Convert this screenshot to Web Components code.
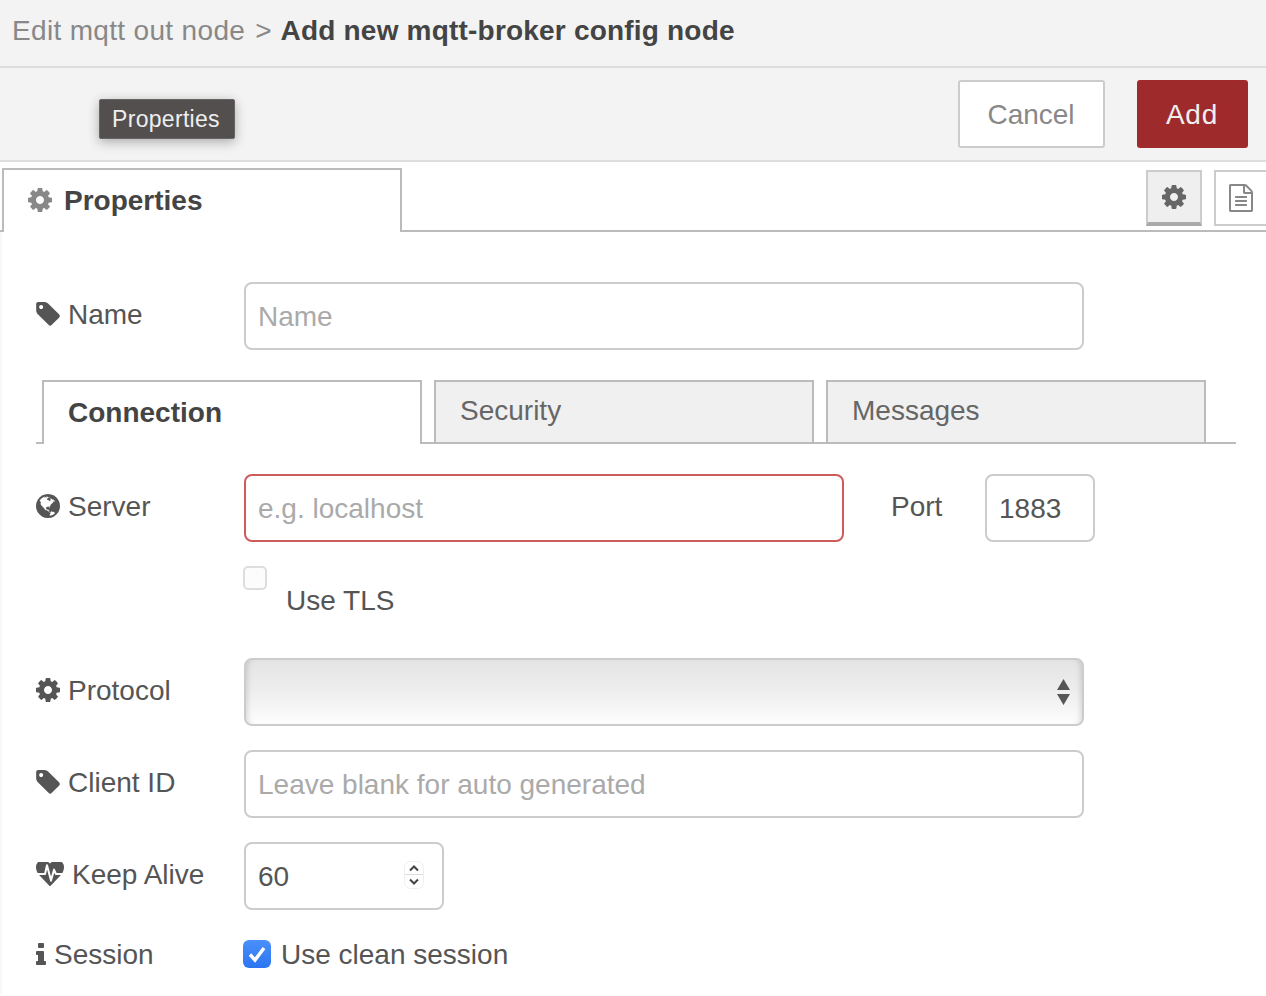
<!DOCTYPE html>
<html lang="en">
<head>
<meta charset="utf-8">
<title>Edit mqtt out node</title>
<style>
  html, body { margin: 0; height: 100%; overflow: hidden; background: #fff; }
  body { font: 28px/40px "Liberation Sans", Arial, sans-serif; color: #555; }
</style>
</head>
<body>
<nr-editor-title>
  <span slot="parent">Edit mqtt out node</span>
  <span slot="current">Add new mqtt-broker config node</span>
</nr-editor-title>
<nr-toolbar>
  <nr-tooltip slot="tip">Properties</nr-tooltip>
  <nr-button>Cancel</nr-button>
  <nr-button primary>Add</nr-button>
</nr-toolbar>
<nr-sheet-tabs label="Properties"></nr-sheet-tabs>
<nr-form>
  <nr-row icon="tag" label="Name"><nr-input grow placeholder="Name"></nr-input></nr-row>
  <nr-tabs>
    <nr-tab active>Connection</nr-tab>
    <nr-tab>Security</nr-tab>
    <nr-tab>Messages</nr-tab>
  </nr-tabs>
  <nr-row icon="globe" label="Server">
    <nr-input width="600" invalid placeholder="e.g. localhost"></nr-input>
    <nr-inline-label>Port</nr-inline-label>
    <nr-input width="110" value="1883"></nr-input>
  </nr-row>
  <nr-row tall><nr-tls-check>Use TLS</nr-tls-check></nr-row>
  <nr-row icon="cog" label="Protocol"><nr-select></nr-select></nr-row>
  <nr-row icon="tag" label="Client ID"><nr-input grow placeholder="Leave blank for auto generated"></nr-input></nr-row>
  <nr-row icon="heartbeat" label="Keep Alive"><nr-input width="200" value="60" spinner></nr-input></nr-row>
  <nr-row icon="info" label="Session" compact><nr-clean-check>Use clean session</nr-clean-check></nr-row>
</nr-form>

<script>
/* font-awesome 4 shapes, with the viewBox cropped to the ink */
const ICONS = {
  cog: { box: '0 128 1536 1536', w: 24, h: 24, d: 'M1024 896q0-106-75-181t-181-75-181 75-75 181 75 181 181 75 181-75 75-181zm512-109v222q0 12-8 23t-20 13l-185 28q-19 54-39 91 35 50 107 138 10 12 10 25t-9 23q-27 37-99 108t-94 71q-12 0-26-9l-138-108q-44 23-91 38-16 136-29 186-7 28-36 28h-222q-14 0-24.500-8.500t-11.500-21.500l-28-184q-49-16-90-37l-141 107q-10 9-25 9-14 0-25-11-126-114-165-168-7-10-7-23 0-12 8-23 15-21 51-66.500t54-70.500q-27-50-41-99l-183-27q-13-2-21-12.500t-8-23.500v-222q0-12 8-23t19-13l186-28q14-46 39-92-40-57-107-138-10-12-10-24 0-10 9-23 26-36 98.500-107.500t94.500-71.500q13 0 26 10l138 107q44-23 91-38 16-136 29-186 7-28 36-28h222q14 0 24.500 8.500t11.500 21.500l28 184q49 16 90 37l142-107q9-9 24-9 13 0 25 10 129 119 165 170 7 8 7 22 0 12-8 23-15 21-51 66.500t-54 70.500q26 50 41 98l183 28q13 2 21 12.500t8 23.500z' },
  tag: { box: '128 128 1515 1536', w: 24, h: 24, d: 'M576 448q0-53-37.500-90.500t-90.500-37.500-90.500 37.500-37.500 90.500 37.500 90.500 90.500 37.500 90.500-37.500 37.500-90.500zm1067 576q0 53-37 90l-491 492q-39 37-91 37-53 0-90-37l-715-716q-38-37-64.500-101t-26.500-117v-416q0-52 38-90t90-38h416q53 0 117 26.500t102 64.500l715 714q37 39 37 91z' },
  globe: { box: '128 128 1536 1536', w: 24, h: 24, rule: 'nonzero', d: 'M896 128q209 0 385.500 103t279.500 279.500 103 385.500-103 385.500-279.500 279.500-385.500 103-385.500-103-279.500-279.500-103-385.500 103-385.500 279.500-279.500 385.500-103zm274 521q-2 1-9.500 9.500t-13.500 9.500q2 0 4.500-5t5-11 3.500-7q6-7 22-15 14-6 52-12 34-8 51 11-2-2 9.500-13t14.500-12q3-2 15-4.500t15-7.500l2-22q-12 1-17.500-7t-6.500-21q0 2-6 8 0-7-4.500-8t-11.500 1-9 1q-10-3-15-7.500t-8-16.500-4-15q-2-5-9.500-11t-9.500-10q-1-2-2.500-5.500t-3-6.500-4-5.500-5.500-2.500-7 5-7.500 10-4.500 5q-3-2-6-1.500t-4.500 1-4.500 3-5 3.500q-3 2-8.500 3t-8.500 2q15-5-1-11-10-4-16-3 9-4 7.500-12t-8.500-14h5q-1-4-8.500-8.500t-17.500-8.500-13-6q-8-5-34-9.500t-33-.5q-5 6-4.500 10.500t4 14 3.500 12.500q1 6-5.500 13t-6.500 12q0 7 14 15.500t10 21.500q-3 8-16 16t-16 12q-5 8-1.500 18.500t10.500 16.500q2 2 1.500 4t-3.500 4.500-5.500 4-6.500 3.500l-3 2q-11 5-20.500-6t-13.500-26q-7-25-16-30-23-8-29 1-5-13-41-26-25-9-58-4 6-1 0-15-7-15-19-12 3-6 4-17.500t1-13.500q3-13 12-23 1-1 7-8.500t9.500-13.500.5-6q35 4 50-11 5-5 11.500-17t10.500-17q9-6 14-5.500t14.500 5.500 14.500 5q14 1 15.500-11t-7.500-20q12 1 3-17-4-7-8-9-12-4-27 5-8 4 2 8-1-1-9.500 10.500t-16.500 17.500-16-5q-1-1-5.500-13.500t-9.500-13.500q-8 0-16 15 3-8-11-15t-24-8q19-12-8-27-7-4-20.500-5t-19.500 4q-5 7-5.500 11.500t5 8 10.500 5.500 11.500 4 8.500 3q14 10 8 14-2 1-8.500 3.500t-11.500 4.500-6 4q-3 4 0 14t-2 14q-5-5-9-17.500t-7-16.500q7 9-25 6l-10-1q-4 0-16 2t-20.500 1-13.500-8q-4-8 0-20 1-4 4-2-4-3-11-9.500t-10-8.500q-46 15-94 41 6 1 12-1 5-2 13-6.500t10-5.500q34-14 42-7l5-5q14 16 20 25-7-4-30-1-20 6-22 12 7 12 5 18-4-3-11.500-10t-14.500-11-15-5q-16 0-22 1-146 80-235 222 7 7 12 8 4 1 5 9t2.500 11 11.500-3q9 8 3 19 1-1 44 27 19 17 21 21 3 11-10 18-1-2-9-9t-9-4q-3 5 .5 18.500t10.500 12.500q-7 0-9.500 16t-2.500 35.500-1 23.500l2 1q-3 12 5.500 34.500t21.500 19.500q-13 3 20 43 6 8 8 9 3 2 12 7.500t15 10 10 10.500q4 5 10 22.500t14 23.500q-2 6 9.500 20t10.500 23q-1 0-2.500 1t-2.500 1q3 7 15.500 14t15.500 13q1 3 2 10t3 11 8 2q2-20-24-62-15-25-17-29-3-5-5.500-15.500t-4.500-14.500q2 0 6 1.500t8.500 3.500 7.500 4 2 3q-3 7 2 17.500t12 18.500 17 19 12 13q6 6 14 19.500t0 13.500q9 0 20 10.500t17 19.500q5 8 8 26t5 24q2 7 8.500 13.500t12.500 9.500l16 8 13 7q5 2 18.500 10.500t21.500 11.500q10 4 16 4t14.500-2.500 13.500-3.500q15-2 29 15t21 21q36 19 55 11-2 1 .5 7.500t8 15.500 9 14.500 5.500 8.500q5 6 18 15t18 15q6-4 7-9-3 8 7 20t18 10q14-3 14-32-31 15-49-18 0-1-2.500-5.500t-4-8.500-2.500-8.500 0-7.500 5-3q9 0 10-3.500t-2-12.500-4-13q-1-8-11-20t-12-15q-5 9-16 8t-16-9q0 1-1.500 5.500t-1.500 6.500q-13 0-15-1 1-3 2.500-17.500t3.500-22.500q1-4 5.500-12t7.500-14.500 4-12.500-4.500-9.500-17.500-2.500q-19 1-26 20-1 3-3 10.500t-5 11.500-9 7q-7 3-24 2t-24-5q-13-8-22.500-29t-9.500-37q0-10 2.500-26.500t3-25-5.500-24.500q3-2 9-9.500t10-10.500q2-1 4.500-1.500t4.500 0 4-1.500 3-6q-1-1-4-3-3-3-4-3 7 3 28.500-1.500t27.500 1.500q15 11 22-2 0-1-2.500-9.500t-.5-13.500q5 27 29 9 3 3 15.500 5t17.500 5q3 2 7 5.500t5.500 4.500 5-.5 8.500-6.500q10 14 12 24 11 40 19 44 7 3 11 2t4.500-9.500 0-14-1.500-12.500l-1-8v-18l-1-8q-15-3-18.500-12t1.500-18.500 15-18.500q1-1 8-3.500t15.500-6.500 12.500-8q21-19 15-35 7 0 11-9-1 0-5-3t-7.500-5-4.500-2q9-5 2-16 5-3 7.500-11t7.500-10q9 12 21 2 8-8 1-16 5-7 20.500-10.500t18.500-9.500q7 2 8-2t1-12 3-12q4-5 15-9t13-5l17-11q3-4 0-4 18 2 31-11 10-11-6-20 3-6-3-9.500t-15-5.500q3-1 11.500-.5t10.500-1.500q15-10-7-16-17-5-43 12zm-163 877q206-36 351-189-3-3-12.500-4.500t-12.500-3.500q-18-7-24-8 1-7-2.500-13t-8-9-12.500-8-11-7q-2-2-7-6t-7-5.500-7.500-4.500-8.500-2-10 1l-3 1q-3 1-5.500 2.500t-5.500 3-4 3 0 2.500q-21-17-36-22-5-1-11-5.500t-10.500-7-10-1.500-11.500 7q-5 5-6 15t-2 13q-7-5 0-17.500t2-18.500q-3-6-10.500-4.500t-12 4.500-11.500 8.500-9 6.500-8.500 5.500-8.500 7.500q-3 4-6 12t-5 11q-2-4-11.500-6.500t-9.500-5.500q2 10 4 35t5 38q7 31-12 48-27 25-29 40-4 22 12 26 0 7-8 20.500t-7 21.500q0 6 2 16z' },
  heartbeat: { box: '0 250 1792 1416', w: 28, h: 24, stretch: true, d: 'M1280 1024h305q-5 6-10 10.500t-9 7.500l-3 4-623 600q-18 18-44 18t-44-18l-624-602q-5-2-21-20h369q22 0 39.500-13.500t22.500-34.500l70-281 190 667q6 20 23 33t39 13q21 0 38-13t23-33l146-485 56 112q18 35 57 35zm512-428q0 145-103 300h-369l-111-221q-8-17-25.500-27t-36.500-8q-45 5-56 46l-129 430-196-686q-6-20-23.500-33t-39.500-13-39 13.500-22 34.500l-116 464h-423q-103-155-103-300 0-220 127-344t351-124q62 0 126.500 21.500t120 58 95.500 68.500 76 68q36-36 76-68t95.500-68.500 120-58 126.500-21.500q224 0 351 124t127 344z' },
  info: { box: '576 128 640 1408', w: 10, h: 22, d: 'M1216 1344v128q0 26-19 45t-45 19h-512q-26 0-45-19t-19-45v-128q0-26 19-45t45-19h64v-384h-64q-26 0-45-19t-19-45v-128q0-26 19-45t45-19h384q26 0 45 19t19 45v576h64q26 0 45 19t19 45zm-128-1152v192q0 26-19 45t-45 19h-256q-26 0-45-19t-19-45v-192q0-26 19-45t45-19h256q26 0 45 19t19 45z' },
  file: { box: '128 0 1536 1792', w: 24, h: 28, d: 'M1596 380q28 28 48 76t20 88v1152q0 40-28 68t-68 28h-1344q-40 0-68-28t-28-68v-1600q0-40 28-68t68-28h896q40 0 88 20t76 48zm-444-244v376h376q-10-29-22-41l-313-313q-12-12-41-22zm384 1528v-1024h-416q-40 0-68-28t-28-68v-416h-768v1536h1280zm-1024-864q0-14 9-23t23-9h704q14 0 23 9t9 23v64q0 14-9 23t-23 9h-704q-14 0-23-9t-9-23v-64zm736 224q14 0 23 9t9 23v64q0 14-9 23t-23 9h-704q-14 0-23-9t-9-23v-64q0-14 9-23t23-9h704zm0 256q14 0 23 9t9 23v64q0 14-9 23t-23 9h-704q-14 0-23-9t-9-23v-64q0-14 9-23t23-9h704z' }
};

function iconSvg(name, color) {
  const i = ICONS[name];
  const fit = i.stretch ? ' preserveAspectRatio="none"' : '';
  return `<svg xmlns="http://www.w3.org/2000/svg" width="${i.w}" height="${i.h}" viewBox="${i.box}"${fit} style="display:block;flex:none" aria-hidden="true"><path fill="${color}" fill-rule="${i.rule || 'nonzero'}" d="${i.d}"/></svg>`;
}

class NrElement extends HTMLElement {
  constructor() {
    super();
    this.attachShadow({ mode: 'open' });
  }

  connectedCallback() {
    this.render();
  }
}

class NrEditorTitle extends NrElement {
  render() {
    this.shadowRoot.innerHTML = `
      <style>
        :host { display: block; height: 66px; background: #f3f3f3; border-bottom: 2px solid #ddd; }
        .crumbs { display: flex; align-items: center; height: 62px; padding-left: 12px; white-space: nowrap; color: #888; }
        .parent { letter-spacing: .33px; }
        .sep { margin: 0 9px 0 10px; }
        .now { font-weight: bold; color: #444; letter-spacing: .2px; }
      </style>
      <div class="crumbs"><span class="parent"><slot name="parent"></slot></span><span class="sep">&gt;</span><span class="now"><slot name="current"></slot></span></div>
    `;
  }
}

class NrToolbar extends NrElement {
  render() {
    this.shadowRoot.innerHTML = `
      <style>
        :host { display: flex; position: relative; justify-content: flex-end; gap: 32px; height: 68px; padding: 12px 18px; background: #f3f3f3; border-bottom: 2px solid #ddd; }
      </style>
      <slot name="tip"></slot>
      <slot></slot>
    `;
  }
}

class NrButton extends NrElement {
  render() {
    const primary = this.hasAttribute('primary');
    this.shadowRoot.innerHTML = `
      <style>
        :host { display: flex; align-items: center; justify-content: center; box-sizing: border-box; height: 68px; border-radius: 3px; padding: 2px 1px 0 0;
          width: ${primary ? 111 : 147}px;
          background: ${primary ? '#9f2a2b' : '#fff'};
          color: ${primary ? '#eee' : '#888'};
          letter-spacing: ${primary ? '.8px' : '0'};
          border: ${primary ? '0' : '2px solid #ccc'}; }
      </style>
      <slot></slot>
    `;
  }
}

class NrTooltip extends NrElement {
  render() {
    this.shadowRoot.innerHTML = `
      <style>
        :host { position: absolute; left: 99px; top: 31px; box-sizing: border-box; width: 136px; height: 40px; display: flex; align-items: center; justify-content: center; padding-right: 2px;
          background: #544f4f; border: 1px solid #666; border-radius: 2px; color: #eee; font-size: 23px; letter-spacing: .3px; line-height: 36px;
          box-shadow: 0 3px 12px rgba(0,0,0,.3); }
      </style>
      <slot></slot>
    `;
  }
}

class NrSheetTabs extends NrElement {
  render() {
    this.shadowRoot.innerHTML = `
      <style>
        :host { display: flex; box-sizing: border-box; height: 70px; padding: 6px 0 0 2px; border-bottom: 2px solid #bbb; }
        .tab { display: flex; align-items: center; gap: 12px; box-sizing: border-box; width: 400px; height: 64px; padding: 0 0 0 24px;
          background: #fff; border: 2px solid #bbb; border-bottom: 0; font-weight: bold; color: #444; }
        .tab svg { margin-top: -2px; }
        .tools { display: flex; gap: 12px; margin: 2px -4px 0 auto; }
        .tool { display: flex; align-items: center; justify-content: center; box-sizing: border-box; width: 56px; height: 56px; border: 2px solid #ccc; background: #fff; }
        .tool.on { background: #efefef; border-bottom: 4px solid #aaa; }
        .tool.doc { padding-right: 2px; }
      </style>
      <div class="tab">${iconSvg('cog', '#888')}<span>${this.getAttribute('label')}</span></div>
      <div class="tools">
        <div class="tool on">${iconSvg('cog', '#666')}</div>
        <div class="tool doc">${iconSvg('file', '#888')}</div>
      </div>
    `;
  }
}

class NrForm extends NrElement {
  render() {
    this.shadowRoot.innerHTML = `
      <style>
        :host { display: flex; flex-direction: column; padding: 50px 30px 0 34px; border-left: 2px solid #f8f8f8; }
      </style>
      <slot></slot>
    `;
  }
}

class NrRow extends NrElement {
  render() {
    const icon = this.getAttribute('icon');
    const label = this.getAttribute('label');
    const tall = this.hasAttribute('tall');
    const compact = this.hasAttribute('compact');
    this.shadowRoot.innerHTML = `
      <style>
        :host { display: flex; align-items: flex-start; height: ${tall ? 92 : compact ? 30 : 68}px; margin: ${compact ? 6 : 0}px 0 ${tall ? 0 : 24}px; }
        .label { display: flex; align-items: center; gap: 8px; flex: none; width: 208px; height: ${compact ? 30 : 66}px; color: #555; white-space: nowrap; }
        .label svg { margin-top: -2px; }
        .content { display: flex; align-items: flex-start; flex: 1; min-width: 0; }
        :host([tall]) .content { margin-left: 208px; }
      </style>
      ${label ? `<div class="label">${iconSvg(icon, '#555')}<span>${label}</span></div>` : ''}
      <div class="content"><slot></slot></div>
    `;
  }
}

class NrInput extends NrElement {
  render() {
    const width = this.hasAttribute('grow') ? 840 : this.getAttribute('width');
    const value = this.getAttribute('value');
    const text = value || this.getAttribute('placeholder');
    this.shadowRoot.innerHTML = `
      <style>
        :host { display: flex; align-items: center; position: relative; box-sizing: border-box; width: ${width}px; height: 68px; padding: 2px 12px 0; flex: none;
          background: #fff; border: 2px solid ${this.hasAttribute('invalid') ? '#cd5c5c' : '#ccc'}; border-radius: 8px;
          color: ${value ? '#555' : '#aaa'}; white-space: nowrap; }
        .spin { position: absolute; right: 18px; top: 17px; }
      </style>
      <span>${text}</span>
      ${this.hasAttribute('spinner') ? `
        <svg class="spin" xmlns="http://www.w3.org/2000/svg" width="20" height="28" viewBox="0 0 20 28" aria-hidden="true">
          <rect x=".5" y=".5" width="19" height="27" rx="6" fill="#fff" stroke="#eee"/>
          <path d="M1 13.500h18" stroke="#ddd"/>
          <path d="M6 9.500l4-4 4 4M6 18.500l4 4 4-4" fill="none" stroke="#444" stroke-width="2"/>
        </svg>` : ''}
    `;
  }
}

class NrInlineLabel extends NrElement {
  render() {
    this.shadowRoot.innerHTML = `
      <style>
        :host { display: flex; align-items: center; flex: none; width: 94px; height: 66px; margin-left: 47px; color: #555; }
      </style>
      <slot></slot>
    `;
  }
}

class NrSelect extends NrElement {
  render() {
    this.shadowRoot.innerHTML = `
      <style>
        :host { display: flex; align-items: center; justify-content: flex-end; box-sizing: border-box; width: 840px; height: 68px; padding-right: 12px; flex: none;
          border: 2px solid #ccc; border-radius: 8px;
          background: linear-gradient(to bottom, #e4e4e4, #eeeeee 50%, #fdfdfd);
          box-shadow: inset 6px 0 5px -4px rgba(0,0,0,.12), inset -6px 0 5px -4px rgba(0,0,0,.12); }
      </style>
      <svg xmlns="http://www.w3.org/2000/svg" width="13" height="26" viewBox="0 0 13 26" aria-hidden="true">
        <path d="M6.500 0L13 11H0zM0 15h13L6.500 26z" fill="#555"/>
      </svg>
    `;
  }
}

class NrTlsCheck extends NrElement {
  render() {
    this.shadowRoot.innerHTML = `
      <style>
        :host { display: block; margin-left: -1px; height: 92px; }
        .box { width: 24px; height: 24px; box-sizing: border-box; border: 2px solid #ddd; border-radius: 5px; background: #fcfcfc; }
        .text { margin: -9px 0 0 43px; line-height: 40px; color: #555; }
      </style>
      <div class="box"></div>
      <div class="text"><slot></slot></div>
    `;
  }
}

class NrCleanCheck extends NrElement {
  render() {
    this.shadowRoot.innerHTML = `
      <style>
        :host { display: flex; align-items: center; gap: 10px; margin-left: -1px; height: 28px; color: #555; white-space: nowrap; }
        svg { display: block; flex: none; }
        span { padding-top: 2px; }
      </style>
      <svg xmlns="http://www.w3.org/2000/svg" width="28" height="28" viewBox="0 0 28 28" aria-hidden="true">
        <defs><linearGradient id="g" x1="0" y1="0" x2="0" y2="1"><stop offset="0" stop-color="#4a90fb"/><stop offset="1" stop-color="#2b75f0"/></linearGradient></defs>
        <rect width="28" height="28" rx="6" fill="url(#g)"/>
        <path d="M7 14.500l5 5.500 9-12" fill="none" stroke="#fff" stroke-width="3.400"/>
      </svg>
      <span><slot></slot></span>
    `;
  }
}

class NrTabs extends NrElement {
  render() {
    this.shadowRoot.innerHTML = `
      <style>
        :host { display: flex; gap: 12px; box-sizing: border-box; height: 64px; margin: 6px 0 30px; padding-left: 6px; border-bottom: 2px solid #bbb; }
      </style>
      <slot></slot>
    `;
  }
}

class NrTab extends NrElement {
  render() {
    const active = this.hasAttribute('active');
    this.shadowRoot.innerHTML = `
      <style>
        :host { display: flex; align-items: center; box-sizing: border-box; width: 380px; padding-left: 24px;
          height: ${active ? 64 : 62}px;
          padding-bottom: ${active ? 0 : 2}px;
          background: ${active ? '#fff' : '#f0f0f0'};
          border: 2px solid #bbb; border-bottom: 0;
          color: ${active ? '#444' : '#666'};
          font-weight: ${active ? 'bold' : 'normal'}; }
      </style>
      <slot></slot>
    `;
  }
}

customElements.define('nr-editor-title', NrEditorTitle);
customElements.define('nr-toolbar', NrToolbar);
customElements.define('nr-button', NrButton);
customElements.define('nr-tooltip', NrTooltip);
customElements.define('nr-sheet-tabs', NrSheetTabs);
customElements.define('nr-form', NrForm);
customElements.define('nr-row', NrRow);
customElements.define('nr-input', NrInput);
customElements.define('nr-inline-label', NrInlineLabel);
customElements.define('nr-select', NrSelect);
customElements.define('nr-tls-check', NrTlsCheck);
customElements.define('nr-clean-check', NrCleanCheck);
customElements.define('nr-tabs', NrTabs);
customElements.define('nr-tab', NrTab);
</script>
</body>
</html>
